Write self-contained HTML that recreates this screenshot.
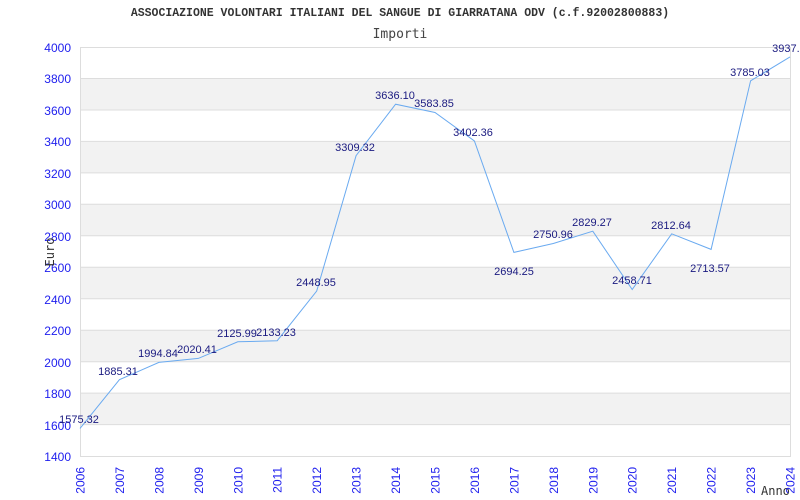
<!DOCTYPE html>
<html><head><meta charset="utf-8"><style>
html,body{margin:0;padding:0;background:#fff;width:800px;height:500px;overflow:hidden}
</style></head><body>
<svg width="800" height="500" xmlns="http://www.w3.org/2000/svg" font-family="'Liberation Sans',sans-serif">
<rect width="800" height="500" fill="#fff"/>
<text x="400" y="16" text-anchor="middle" font-family="'Liberation Mono',monospace" font-weight="bold" font-size="11.5" fill="#333">ASSOCIAZIONE VOLONTARI ITALIANI DEL SANGUE DI GIARRATANA ODV (c.f.92002800883)</text>
<text x="400" y="38" text-anchor="middle" font-family="'DejaVu Sans Mono','Liberation Mono',monospace" font-size="13" fill="#444">Importi</text>
<g fill="#f2f2f2">
<rect x="80" y="78.5" width="710" height="31.5"/>
<rect x="80" y="141.4" width="710" height="31.5"/>
<rect x="80" y="204.3" width="710" height="31.5"/>
<rect x="80" y="267.2" width="710" height="31.5"/>
<rect x="80" y="330.2" width="710" height="31.5"/>
<rect x="80" y="393.1" width="710" height="31.5"/>
</g>
<g stroke="#ddd" stroke-width="1">
<line x1="80" y1="47.5" x2="790" y2="47.5"/>
<line x1="80" y1="78.5" x2="790" y2="78.5"/>
<line x1="80" y1="110" x2="790" y2="110"/>
<line x1="80" y1="141.4" x2="790" y2="141.4"/>
<line x1="80" y1="172.9" x2="790" y2="172.9"/>
<line x1="80" y1="204.3" x2="790" y2="204.3"/>
<line x1="80" y1="235.8" x2="790" y2="235.8"/>
<line x1="80" y1="267.2" x2="790" y2="267.2"/>
<line x1="80" y1="298.7" x2="790" y2="298.7"/>
<line x1="80" y1="330.2" x2="790" y2="330.2"/>
<line x1="80" y1="361.7" x2="790" y2="361.7"/>
<line x1="80" y1="393.1" x2="790" y2="393.1"/>
<line x1="80" y1="424.6" x2="790" y2="424.6"/>
<line x1="80.5" y1="47" x2="80.5" y2="456.5"/>
<line x1="790.5" y1="47" x2="790.5" y2="456.5"/>
<line x1="80" y1="456.5" x2="791" y2="456.5"/>
</g>
<g fill="#2020ee" font-size="12" text-anchor="end">
<text x="71" y="52">4000</text><text x="71" y="83">3800</text><text x="71" y="115">3600</text>
<text x="71" y="146">3400</text><text x="71" y="178">3200</text><text x="71" y="209">3000</text>
<text x="71" y="241">2800</text><text x="71" y="272">2600</text><text x="71" y="304">2400</text>
<text x="71" y="335">2200</text><text x="71" y="367">2000</text><text x="71" y="398">1800</text>
<text x="71" y="430">1600</text><text x="71" y="461">1400</text>
</g>
<text transform="translate(54,252) rotate(-90)" text-anchor="middle" font-family="'DejaVu Sans Mono',monospace" font-size="12" fill="#333">Euro</text>
<text x="761" y="495" font-family="'DejaVu Sans Mono',monospace" font-size="12" fill="#333">Anno</text>
<g fill="#2020ee" font-size="12" text-anchor="end">
<text transform="translate(84.5,467) rotate(-90)">2006</text>
<text transform="translate(123.9,467) rotate(-90)">2007</text>
<text transform="translate(163.4,467) rotate(-90)">2008</text>
<text transform="translate(202.8,467) rotate(-90)">2009</text>
<text transform="translate(242.3,467) rotate(-90)">2010</text>
<text transform="translate(281.7,467) rotate(-90)">2011</text>
<text transform="translate(321.2,467) rotate(-90)">2012</text>
<text transform="translate(360.6,467) rotate(-90)">2013</text>
<text transform="translate(400.1,467) rotate(-90)">2014</text>
<text transform="translate(439.5,467) rotate(-90)">2015</text>
<text transform="translate(478.9,467) rotate(-90)">2016</text>
<text transform="translate(518.4,467) rotate(-90)">2017</text>
<text transform="translate(557.8,467) rotate(-90)">2018</text>
<text transform="translate(597.3,467) rotate(-90)">2019</text>
<text transform="translate(636.7,467) rotate(-90)">2020</text>
<text transform="translate(676.2,467) rotate(-90)">2021</text>
<text transform="translate(715.6,467) rotate(-90)">2022</text>
<text transform="translate(755.1,467) rotate(-90)">2023</text>
<text transform="translate(794.5,467) rotate(-90)">2024</text>
</g>
<polyline fill="none" stroke="#6aaaf0" stroke-width="1" points="80,428.4 119.4,379.7 158.9,362.4 198.3,358.4 237.8,341.8 277.2,340.7 316.7,291 356.1,155.6 395.6,104.2 435,112.5 474.4,141 513.9,252.4 553.3,243.5 592.8,231.2 632.2,289.5 671.7,233.8 711.1,249.4 750.6,80.8 790,56.9"/>
<g fill="#1a1a80" font-size="11" text-anchor="middle">
<text x="79" y="423">1575.32</text>
<text x="118" y="375">1885.31</text>
<text x="158" y="357">1994.84</text>
<text x="197" y="353">2020.41</text>
<text x="237" y="337">2125.99</text>
<text x="276" y="336">2133.23</text>
<text x="316" y="286">2448.95</text>
<text x="355" y="151">3309.32</text>
<text x="395" y="99">3636.10</text>
<text x="434" y="107">3583.85</text>
<text x="473" y="136">3402.36</text>
<text x="514" y="275">2694.25</text>
<text x="553" y="238">2750.96</text>
<text x="592" y="226">2829.27</text>
<text x="632" y="284">2458.71</text>
<text x="671" y="229">2812.64</text>
<text x="710" y="272">2713.57</text>
<text x="750" y="76">3785.03</text>
<text x="789" y="52">3937.2</text>
</g>
</svg>
</body></html>
